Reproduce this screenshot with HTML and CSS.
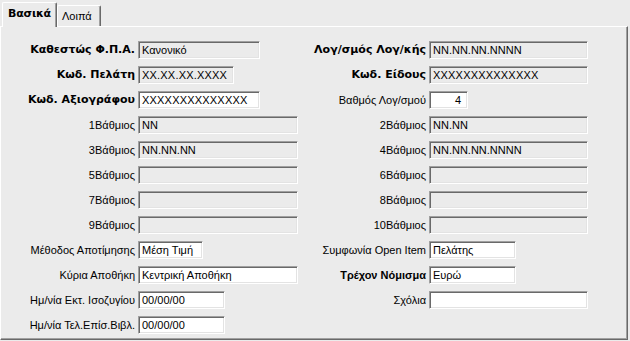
FILE: index.html
```html
<!DOCTYPE html>
<html lang="el">
<head>
<meta charset="utf-8">
<title>Βασικά</title>
<link rel="stylesheet" href="styles.css">
</head>
<body>
<div class="window">
  <div class="tabs">
    <div class="tab active">Βασικά</div>
    <div class="tab">Λοιπά</div>
  </div>
  <div class="panel">
    <div class="form">
      <div class="label heavy">Καθεστώς Φ.Π.Α.</div>
      <div class="cell"><div class="field ro w-l">Κανονικό</div></div>
      <div class="label heavy">Λογ/σμός Λογ/κής</div>
      <div class="cell"><div class="field ro w-full">NN.NN.NN.NNNN</div></div>

      <div class="label heavy">Κωδ. Πελάτη</div>
      <div class="cell"><div class="field ro w-code mask">XX.XX.XX.XXXX</div></div>
      <div class="label heavy">Κωδ. Είδους</div>
      <div class="cell"><div class="field ro w-full mask">XXXXXXXXXXXXXX</div></div>

      <div class="label heavy">Κωδ. Αξιογράφου</div>
      <div class="cell"><div class="field w-l mask">XXXXXXXXXXXXXX</div></div>
      <div class="label">Βαθμός Λογ/σμού</div>
      <div class="cell"><div class="field w-xs num">4</div></div>

      <div class="label">1Βάθμιος</div>
      <div class="cell"><div class="field ro w-full">NN</div></div>
      <div class="label">2Βάθμιος</div>
      <div class="cell"><div class="field ro w-full">NN.NN</div></div>

      <div class="label">3Βάθμιος</div>
      <div class="cell"><div class="field ro w-full">NN.NN.NN</div></div>
      <div class="label">4Βάθμιος</div>
      <div class="cell"><div class="field ro w-full">NN.NN.NN.NNNN</div></div>

      <div class="label">5Βάθμιος</div>
      <div class="cell"><div class="field ro w-full"></div></div>
      <div class="label">6Βάθμιος</div>
      <div class="cell"><div class="field ro w-full"></div></div>

      <div class="label">7Βάθμιος</div>
      <div class="cell"><div class="field ro w-full"></div></div>
      <div class="label">8Βάθμιος</div>
      <div class="cell"><div class="field ro w-full"></div></div>

      <div class="label">9Βάθμιος</div>
      <div class="cell"><div class="field ro w-full"></div></div>
      <div class="label">10Βάθμιος</div>
      <div class="cell"><div class="field ro w-full"></div></div>

      <div class="label">Μέθοδος Αποτίμησης</div>
      <div class="cell"><div class="field w-s">Μέση Τιμή</div></div>
      <div class="label">Συμφωνία Open Item</div>
      <div class="cell"><div class="field w-m">Πελάτης</div></div>

      <div class="label">Κύρια Αποθήκη</div>
      <div class="cell"><div class="field w-full">Κεντρική Αποθήκη</div></div>
      <div class="label bold">Τρέχον Νόμισμα</div>
      <div class="cell"><div class="field w-m">Ευρώ</div></div>

      <div class="label">Ημ/νία Εκτ. Ισοζυγίου</div>
      <div class="cell"><div class="field w-m">00/00/00</div></div>
      <div class="label">Σχόλια</div>
      <div class="cell"><div class="field w-full"></div></div>

      <div class="label">Ημ/νία Τελ.Επίσ.Βιβλ.</div>
      <div class="cell"><div class="field w-m">00/00/00</div></div>
    </div>
  </div>
</div>
</body>
</html>
```
FILE: styles.css
```css
html, body {
  margin: 0;
  padding: 0;
  background: #ebebeb;
}

body {
  font-family: "Liberation Sans", Arial, sans-serif;
  font-size: 11px;
  color: #000;
  width: 630px;
  height: 341px;
  overflow: hidden;
}

.window {
  width: 628px;
}

.tabs {
  display: flex;
  align-items: flex-end;
  height: 26px;
  padding-left: 2px;
}

.tab {
  box-sizing: border-box;
  height: 21px;
  padding: 3px 8px 0 4px;
  border-top: 1px solid #fff;
  border-left: 1px solid #fff;
  border-right: 1px solid #696969;
  box-shadow: inset -1px 0 #a0a0a0;
  border-radius: 2px 2px 0 0;
  line-height: 14px;
}

.tab.active {
  position: relative;
  z-index: 1;
  height: 25px;
  margin-bottom: -1px;
  padding: 4px 5px 0 5px;
  font-family: "DejaVu Sans", "Liberation Sans", sans-serif;
  font-weight: bold;
  letter-spacing: -0.2px;
  background: #ebebeb;
}

.panel {
  box-sizing: border-box;
  height: 314px;
  border-top: 1px solid #fff;
  border-left: 1px solid #fff;
  border-right: 1px solid #696969;
  border-bottom: 1px solid #696969;
  box-shadow: inset -1px -1px #a0a0a0;
  padding-top: 14px;
}

.form {
  display: grid;
  grid-template-columns: 134px 160px 125px 159px;
  grid-auto-rows: 18px;
  column-gap: 3px;
  row-gap: 7px;
}

.label {
  text-align: right;
  line-height: 18px;
  white-space: nowrap;
}

.label.bold {
  font-weight: bold;
}

.label.heavy {
  font-family: "DejaVu Sans", "Liberation Sans", sans-serif;
  font-weight: bold;
}

.cell {
  display: flex;
}

.field {
  box-sizing: border-box;
  height: 18px;
  background: #fff;
  border-style: solid;
  border-width: 1px;
  border-color: #a0a0a0 #fff #fff #a0a0a0;
  box-shadow: inset 1px 1px #696969, inset -1px -1px #e3e3e3;
  padding: 1px 2px 0 3px;
  line-height: 15px;
  white-space: nowrap;
  overflow: hidden;
}

.field.ro {
  background: #ebebeb;
}

.field.num {
  text-align: right;
  padding-right: 6px;
}

.field.mask {
  letter-spacing: 0.2px;
}

.w-xs { width: 39px; }
.w-s { width: 65px; }
.w-m { width: 87px; }
.w-code { width: 96px; }
.w-l { width: 122px; }
.w-full { width: 100%; }
```
